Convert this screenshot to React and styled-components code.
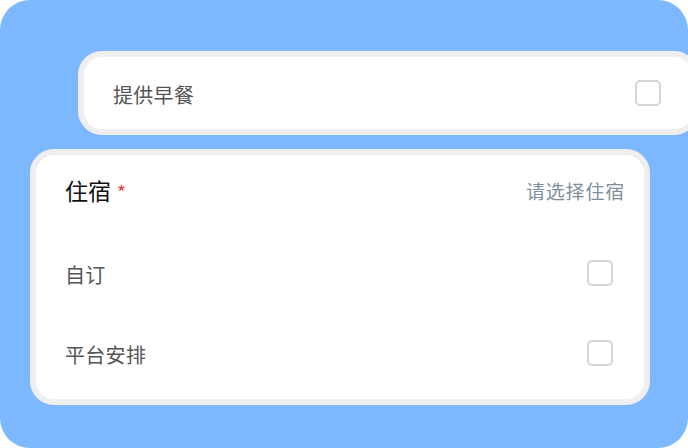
import React from 'react';
import styled, { createGlobalStyle } from 'styled-components';

const GlobalStyle = createGlobalStyle`
  html, body {
    margin: 0;
    padding: 0;
    background: #ffffff;
  }
  body {
    font-family: 'Noto Sans CJK SC', 'Noto Sans', sans-serif;
  }
`;

const Stage = styled.div`
  width: 688px;
  height: 448px;
  background: #7db8ff;
  border-radius: 30px;
  overflow: hidden;
  box-sizing: border-box;
  padding-top: 51px;
  display: flex;
  flex-direction: column;
  gap: 14px;
`;

const Card = styled.div`
  flex: none;
  width: 620px;
  margin-left: ${({ offset }) => offset}px;
  box-sizing: border-box;
  background: #ffffff;
  border: 6px solid #efefef;
  border-radius: 24px;
  padding: 0 31px 0 29px;
`;

const Row = styled.div`
  display: flex;
  align-items: center;
  justify-content: space-between;
  height: ${({ h }) => h || 80}px;
  margin-top: ${({ top }) => top || 0}px;
`;

const Label = styled.span`
  font-size: 20px;
  color: #555555;
  letter-spacing: 0.3px;
  margin-top: 2px;
`;

const Title = styled.span`
  font-size: 23px;
  color: #111111;
  display: flex;
  align-items: center;
`;

const Required = styled.span`
  color: #f0353a;
  font-size: 19px;
  margin-left: 6px;
  margin-top: 2px;
`;

const Placeholder = styled.span`
  font-size: 19px;
  color: #7e8f9c;
  letter-spacing: 0.8px;
  margin-right: -12px;
`;

const Box = styled.span`
  width: 26px;
  height: 26px;
  box-sizing: border-box;
  border: 2px solid #d6d6d6;
  border-radius: 5px;
  background: #ffffff;
`;

const List = styled.div`
  display: flex;
  flex-direction: column;
  padding-bottom: 6px;
`;

const App = () => (
  <>
    <GlobalStyle />
    <Stage>
      <Card offset={78}>
        <Row h={72}>
          <Label>提供早餐</Label>
          <Box />
        </Row>
      </Card>
      <Card offset={30}>
        <List>
          <Row h={70}>
            <Title>
              住宿<Required>*</Required>
            </Title>
            <Placeholder>请选择住宿</Placeholder>
          </Row>
          <Row top={8}>
            <Label>自订</Label>
            <Box />
          </Row>
          <Row>
            <Label>平台安排</Label>
            <Box />
          </Row>
        </List>
      </Card>
    </Stage>
  </>
);

export default App;
